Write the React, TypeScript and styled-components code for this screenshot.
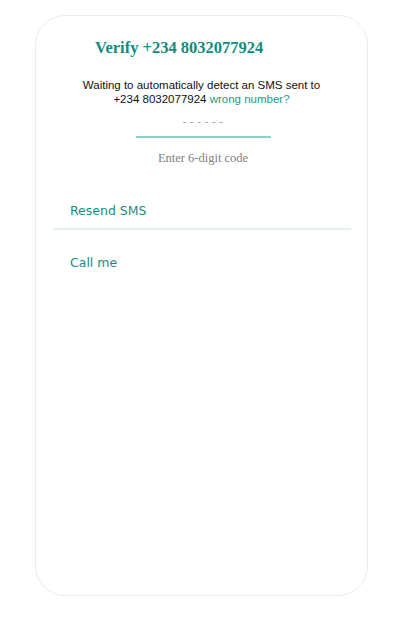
import React from "react";
import styled, { createGlobalStyle } from "styled-components";

const Global = createGlobalStyle`
  html, body { margin: 0; padding: 0; background: #ffffff; }
  * { box-sizing: border-box; }
`;

const Page = styled.div`
  padding: 15px 36px 21px 35px;
  width: 404px;
  height: 617px;
`;

const Card = styled.div`
  height: 581px;
  border: 1px solid #ececec;
  border-radius: 30px;
  background: #fff;
  display: flex;
  flex-direction: column;
`;

const Title = styled.h1`
  margin: 22px 0 0 59px;
  font-family: "Liberation Serif", "Times New Roman", serif;
  font-weight: bold;
  font-size: 16.5px;
  line-height: 20px;
  color: #128c7e;
`;

const Message = styled.p`
  margin: 20px 0 0 0;
  text-align: center;
  font-family: "Liberation Sans", Arial, sans-serif;
  font-size: 11.5px;
  line-height: 14px;
  color: #111;
`;

const Link = styled.span`
  color: #1d9a8c;
`;

const CodeBox = styled.div`
  display: flex;
  flex-direction: column;
  align-items: center;
  margin-top: 7px;
  padding-left: 3px;
`;

const CodeInput = styled.div`
  width: 135px;
  text-align: center;
  font-family: "Liberation Sans", Arial, sans-serif;
  font-size: 11px;
  letter-spacing: 0.3px;
  line-height: 16px;
  color: #9a9a9a;
  padding-bottom: 7px;
  border-bottom: 2px solid #8fcfc6;
`;

const Hint = styled.div`
  margin-top: 12px;
  font-family: "Liberation Serif", "Times New Roman", serif;
  font-size: 12.5px;
  line-height: 16px;
  color: #808080;
`;

const Actions = styled.div`
  margin: 25px 16px 0 17px;
  display: flex;
  flex-direction: column;
`;

const Action = styled.div<{ $divider?: boolean }>`
  padding: 12px 17px 12px;
  font-family: "DejaVu Sans", Verdana, sans-serif;
  font-size: 12.5px;
  line-height: 16px;
  color: #1c8c80;
  ${(p) => (p.$divider ? "border-bottom: 2px solid #e4f1ef; padding-bottom: 9px;" : "padding-top: 25px;")}
`;

export default function App() {
  return (
    <>
      <Global />
      <Page>
        <Card>
          <Title>Verify +234 8032077924</Title>
          <Message>
            Waiting to automatically detect an SMS sent to
            <br />
            +234 8032077924 <Link>wrong number?</Link>
          </Message>
          <CodeBox>
            <CodeInput>- - - - - -</CodeInput>
            <Hint>Enter 6-digit code</Hint>
          </CodeBox>
          <Actions>
            <Action $divider>Resend SMS</Action>
            <Action>Call me</Action>
          </Actions>
        </Card>
      </Page>
    </>
  );
}
